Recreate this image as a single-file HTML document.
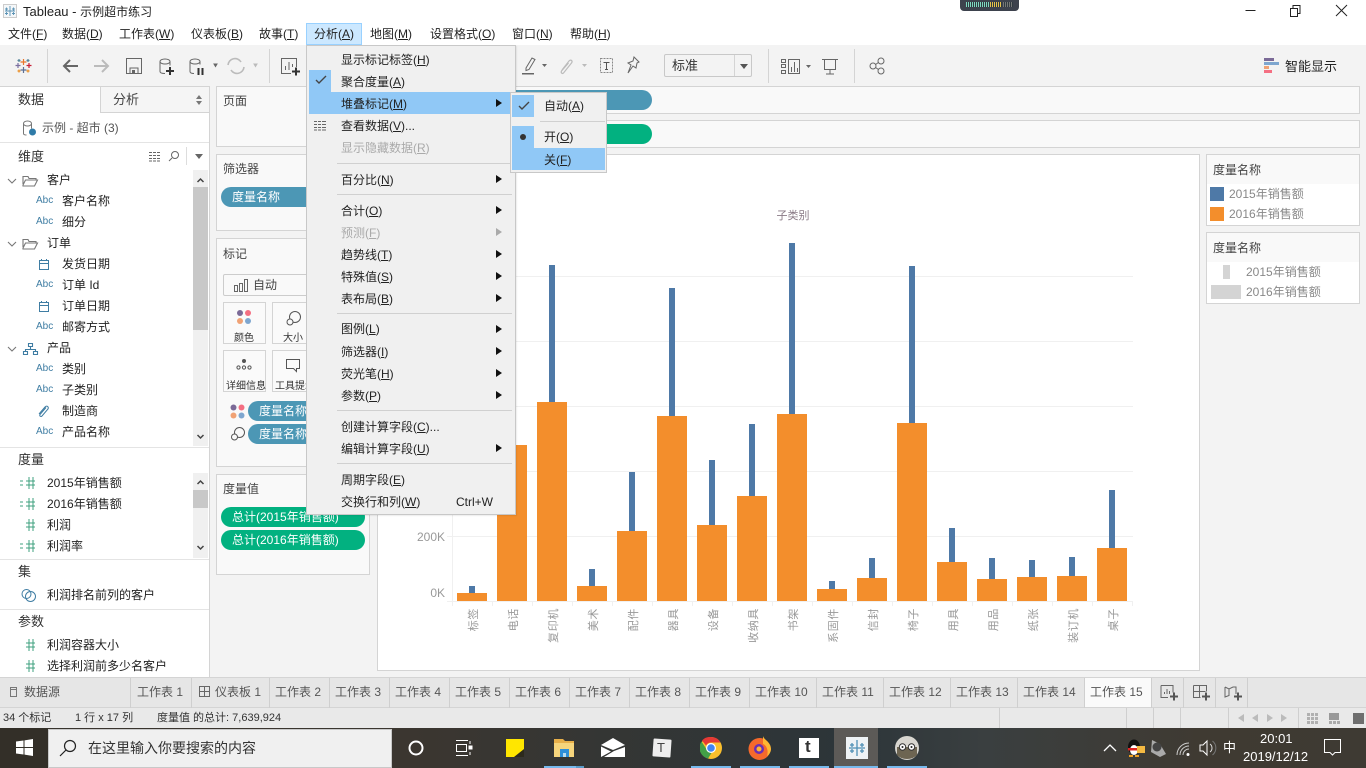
<!DOCTYPE html>
<html lang="zh"><head><meta charset="utf-8"><title>Tableau - 示例超市练习</title>
<style>
*{box-sizing:border-box}
html,body{margin:0;padding:0;width:1366px;height:768px;overflow:hidden;background:#f3f3f3;font-family:"Liberation Sans","Noto Sans CJK SC",sans-serif;font-size:12px;color:#222}
.a,.t,svg.i{position:absolute}
.t{white-space:nowrap;line-height:18px;height:18px}
u{text-decoration:underline;text-underline-offset:1px}
.b{position:absolute;background:#f9f9f9;border:1px solid #d4d4d4}
.p{position:absolute;height:20px;border-radius:10px;color:#fff;line-height:21px;white-space:nowrap;overflow:hidden;padding-left:11px}
.bl{background:#4c97b5}.gr{background:#02b180}
.abc{color:#3f7da3;font-size:10px;left:36px}
.f{left:62px}
.g{color:#aaa}
.m{left:341px}
.ar{position:absolute;left:496px;width:0;height:0;border-left:6px solid #111;border-top:4px solid transparent;border-bottom:4px solid transparent}
.sep{position:absolute;height:1px;background:#d0d0d0;left:337px;width:175px}
.hd{font-size:13px;left:18px;color:#333}
.n{left:47px}
.tab{color:#555;top:683px}
.st{font-size:11px;color:#333;top:709px}
.v{position:absolute;width:1px;background:#cfcfcf}
.tb{position:absolute;width:1px;background:#d4d4d4;top:49px;height:34px}
.hs{position:absolute;height:1px;background:#e4e4e4;left:0;width:209px}
</style></head><body>

<!-- title bar -->
<div class="a" style="left:0;top:0;width:1366px;height:45px;background:#fff"></div>
<svg class="i" style="left:3px;top:4px" width="14" height="14" viewBox="0 0 14 14"><rect x=".5" y=".5" width="13" height="13" fill="#f4f7f9" stroke="#ccc"/><path d="M7 2v10M2 7h10M3.500 3.500v3M2 5h3M10.500 3.500v3M9 5h3M3.500 8v3M2 9.500h3M10.500 8v3M9 9.500h3" stroke="#5b93b5" stroke-width=".9" fill="none"/></svg>
<div class="t" style="left:23px;top:3px;font-size:13px;color:#222">Tableau - <span style="font-size:12px">示例超市练习</span></div>
<div class="a" style="left:960px;top:0;width:59px;height:11px;background:#3d424d;border-radius:0 0 4px 4px"></div>
<div class="a" style="left:966px;top:2px;width:36px;height:5px;background:repeating-linear-gradient(90deg,#7fd7c0 0 1px,#2f3a40 1px 2px)"></div>
<div class="a" style="left:990px;top:2px;width:12px;height:5px;background:repeating-linear-gradient(90deg,#e8c24a 0 1px,#2f3a40 1px 2px)"></div>
<div class="a" style="left:1003px;top:2px;width:10px;height:5px;background:repeating-linear-gradient(90deg,#777 0 1px,#2f3a40 1px 2px)"></div>
<svg class="i" style="left:1240px;top:0" width="126" height="24" fill="none" stroke="#222"><path d="M5.500 10.500h10"/><path d="M50.500 8.500h7v8h-7zM53 8V5.500h7v8h-2"/><path d="M96 5l11 11M107 5L96 16"/></svg>

<!-- menu bar -->
<div class="t" style="left:8px;top:25px">文件(<u>F</u>)</div>
<div class="t" style="left:62px;top:25px">数据(<u>D</u>)</div>
<div class="t" style="left:119px;top:25px">工作表(<u>W</u>)</div>
<div class="t" style="left:191px;top:25px">仪表板(<u>B</u>)</div>
<div class="t" style="left:259px;top:25px">故事(<u>T</u>)</div>
<div class="a" style="left:306px;top:23px;width:56px;height:22px;background:#cce8ff;border:1px solid #99d1ff"></div>
<div class="t" style="left:314px;top:25px">分析(<u>A</u>)</div>
<div class="t" style="left:370px;top:25px">地图(<u>M</u>)</div>
<div class="t" style="left:430px;top:25px">设置格式(<u>O</u>)</div>
<div class="t" style="left:512px;top:25px">窗口(<u>N</u>)</div>
<div class="t" style="left:570px;top:25px">帮助(<u>H</u>)</div>

<!-- toolbar -->
<div class="a" style="left:0;top:45px;width:1366px;height:41px;background:#f3f3f3"></div>
<div class="tb" style="left:47px"></div><div class="tb" style="left:269px"></div><div class="tb" style="left:768px"></div><div class="tb" style="left:854px"></div>
<svg class="i" style="left:14px;top:56px" width="19" height="19" viewBox="0 0 19 19" fill="none" stroke-width="1.200"><path d="M9.500 3v6M6.500 6h6" stroke="#e8762b"/><path d="M9.500 11v6M6.500 14h6" stroke="#5b6f95"/><path d="M4 7v5M1.500 9.500h5" stroke="#7b6fa0"/><path d="M15 7v5M12.500 9.500h5" stroke="#c72037"/><path d="M5 3v3M3.500 4.500h3M14 3v3M12.500 4.500h3" stroke="#59879b"/><path d="M5 13.500v3M3.500 15h3M14 13.500v3M12.500 15h3" stroke="#eb912b"/></svg>
<svg class="i" style="left:60px;top:55px" width="244" height="24" viewBox="0 0 244 24" fill="none">
<path d="M18 11H4M10 5l-6 6 6 6" stroke="#666" stroke-width="2"/>
<path d="M34 11h14M42 5l6 6-6 6" stroke="#bbb" stroke-width="2"/>
<path d="M66.500 3.500h15v15h-15zM70 18.500V13h8v5.500" stroke="#666"/><rect x="72" y="15" width="3" height="3" fill="#666"/>
<path d="M100 6.500a5 2.500 0 0 1 10 0v4M100 6.500v10c0 1.500 2 2 5 2M100 6.500a5 2.500 0 0 0 10 0" stroke="#666"/><path d="M110 12v8M106 16h8" stroke="#333" stroke-width="2"/>
<path d="M130 6.500a5 2.500 0 0 1 10 0v3M130 6.500v10c0 1.500 2 2 4 2M130 6.500a5 2.500 0 0 0 10 0" stroke="#666"/><path d="M138.500 13v7M142.500 13v7" stroke="#333" stroke-width="2"/>
<path d="M154 9l3 0-1.500 2.500z" fill="#666" stroke="#666"/>
<path d="M168 10a7 7 0 0 1 13-3M184 12a7 7 0 0 1-13 3" stroke="#bbb" stroke-width="1.600"/>
<path d="M194 9l3 0-1.500 2.500z" fill="#bbb" stroke="#bbb"/>
<path d="M236.500 12V3.500h-15v15H231M225.500 15v-4M229 15V7M232.500 12V9" stroke="#666"/>
<path d="M232 16.500h8M236 12.500v8" stroke="#333" stroke-width="2"/>
</svg>
<svg class="i" style="left:521px;top:56px" width="130" height="22" viewBox="0 0 130 22" fill="none">
<path d="M5 12l6-10 3 1.500-6 10-3 1z" stroke="#666"/><rect x="1" y="17" width="12" height="1.500" fill="#666"/>
<path d="M21 8h5l-2.500 3z" fill="#666"/>
<path d="M41 14l7-9c2-2 4 0 2.500 2l-8 10c-1 1-3 0-2-2l7-8" stroke="#bbb" stroke-width="1.200"/>
<path d="M61 8h5l-2.500 3z" fill="#bbb"/>
<rect x="79.500" y="2.500" width="12" height="14" stroke="#888" stroke-dasharray="2 1"/>
<path d="M82.500 6.500h6M85.500 6.500v7M84 13.500h3" stroke="#555"/>
<path d="M113 1l5 5-2 1-1 5-3-2-5 7 3-8-3-2 5-2z" stroke="#666"/>
</svg>
<div class="a" style="left:664px;top:54px;width:88px;height:23px;background:#f3f3f3;border:1px solid #c8c8c8;border-radius:2px"></div>
<div class="a" style="left:734px;top:55px;width:1px;height:21px;background:#d4d4d4"></div>
<div class="a" style="left:740px;top:64px;width:0;height:0;border-left:4px solid transparent;border-right:4px solid transparent;border-top:5px solid #555"></div>
<div class="t" style="left:672px;top:57px;font-size:13px;color:#333">标准</div>
<svg class="i" style="left:780px;top:56px" width="110" height="22" viewBox="0 0 110 22" fill="none" stroke="#666">
<path d="M1.500 3.500h4v3h-4zM1.500 8.500h4v3h-4zM1.500 14.500h4v3h-4zM8.500 3.500h11v14h-11z"/><path d="M11.500 16v-5M14.500 16V6M17.500 16v-4" />
<path d="M26 9h5l-2.500 3z" fill="#666" stroke="none"/>
<path d="M42 3.500h16M44.500 3.500v10h11v-10M50 13.500v4M46 18h8"/>
<circle cx="93" cy="10" r="3"/><circle cx="101" cy="5" r="3"/><circle cx="101" cy="15" r="3"/><path d="M95.500 8.500l3-2M95.500 11.500l3 2"/>
</svg>
<div class="a" style="left:1264px;top:58px;width:10px;height:3px;background:#7b6a97"></div>
<div class="a" style="left:1264px;top:62px;width:15px;height:3px;background:#7ea6cf"></div>
<div class="a" style="left:1264px;top:66px;width:5px;height:3px;background:#f0a275"></div>
<div class="a" style="left:1264px;top:70px;width:8px;height:3px;background:#f46f82"></div>
<div class="t" style="left:1285px;top:58px;font-size:13px;color:#222">智能显示</div>

<!-- left panel -->
<div class="a" style="left:0;top:86px;width:210px;height:591px;background:#fff;border-right:1px solid #d4d4d4"></div>
<div class="a" style="left:100px;top:86px;width:110px;height:27px;background:#f5f5f5;border:1px solid #d4d4d4;border-right:1px solid #d4d4d4"></div>
<div class="a" style="left:0;top:86px;width:100px;height:1px;background:#d4d4d4"></div>
<div class="t hd" style="top:91px">数据</div>
<div class="t" style="left:113px;top:91px;font-size:13px;color:#444">分析</div>
<div class="a" style="left:196px;top:95px;width:0;height:0;border-left:3px solid transparent;border-right:3px solid transparent;border-bottom:4px solid #777"></div>
<div class="a" style="left:196px;top:101px;width:0;height:0;border-left:3px solid transparent;border-right:3px solid transparent;border-top:4px solid #777"></div>
<svg class="i" style="left:22px;top:120px" width="16" height="16" viewBox="0 0 16 16" fill="none" stroke="#777"><path d="M1.500 3.500a4 2.500 0 0 1 8 0v5M1.500 3.500v10c0 1 1 1.500 3 1.500M1.500 3.500a4 2.500 0 0 0 8 0"/><circle cx="10.500" cy="12" r="3.500" fill="#2f7ba8" stroke="none"/></svg>
<div class="t" style="left:42px;top:119px;color:#555">示例 - 超市 (3)</div>
<div class="hs" style="top:142px"></div>
<div class="t hd" style="top:148px">维度</div>
<svg class="i" style="left:148px;top:150px" width="48" height="14" viewBox="0 0 48 14" fill="none" stroke="#666"><path d="M1 2.500h3M5 2.500h3M9 2.500h3M1 5.500h3M5 5.500h3M9 5.500h3M1 8.500h3M5 8.500h3M9 8.500h3M1 11h3M5 11h3M9 11h3"/><circle cx="27" cy="5" r="3.500"/><path d="M24 8l-3 3"/></svg>
<div class="a" style="left:186px;top:147px;width:1px;height:18px;background:#ddd"></div>
<div class="a" style="left:195px;top:154px;width:0;height:0;border-left:4px solid transparent;border-right:4px solid transparent;border-top:5px solid #666"></div>
<div class="a" style="left:193px;top:170px;width:15px;height:276px;background:#f0f0f0"></div>
<div class="a" style="left:193px;top:187px;width:15px;height:143px;background:#c8c8c8"></div>
<svg class="i" style="left:193px;top:173px" width="15" height="270" viewBox="0 0 15 270" fill="none" stroke="#444" stroke-width="1.500"><path d="M4.500 9L7.500 6l3 3M4.500 262l3 3 3-3"/></svg>

<svg class="i" style="left:7px;top:173px" width="32" height="185" viewBox="0 0 32 185" fill="none" stroke="#777" stroke-width="1.100">
<path d="M1 6l4 4 4-4M1 69l4 4 4-4M1 174l4 4 4-4"/>
<path d="M16 11V3.500h5l1 2h7v2M16 12l2.500-5h12l-3 6H16z" fill="#fff"/>
<path d="M16 74v-7.500h5l1 2h7v2M16 75l2.500-5h12l-3 6H16z" fill="#fff"/>
<path d="M21.500 170.500h4v3h-4zM16.500 178.500h4v3h-4zM26.500 178.500h4v3h-4zM23.500 173.500v3M18.500 178.500v-2h10v2" stroke="#3f7da3"/>
</svg>
<div class="t n" style="top:171px">客户</div>
<div class="t abc" style="top:192px">Abc</div><div class="t f" style="top:192px">客户名称</div>
<div class="t abc" style="top:213px">Abc</div><div class="t f" style="top:213px">细分</div>
<div class="t n" style="top:234px">订单</div>
<svg class="i" style="left:38px;top:258px" width="12" height="54" viewBox="0 0 12 54" fill="none" stroke="#3f7da3"><path d="M1.500 2.500h9v9h-9zM1.500 5.500h9M3.500 1v2M8.500 1v2"/><path d="M1.500 44.500h9v9h-9zM1.500 47.500h9M3.500 43v2M8.500 43v2"/></svg>
<div class="t f" style="top:255px">发货日期</div>
<div class="t abc" style="top:276px">Abc</div><div class="t f" style="top:276px">订单 Id</div>
<div class="t f" style="top:297px">订单日期</div>
<div class="t abc" style="top:318px">Abc</div><div class="t f" style="top:318px">邮寄方式</div>
<div class="t n" style="top:339px">产品</div>
<div class="t abc" style="top:360px">Abc</div><div class="t f" style="top:360px">类别</div>
<div class="t abc" style="top:381px">Abc</div><div class="t f" style="top:381px">子类别</div>
<svg class="i" style="left:37px;top:404px" width="14" height="14" viewBox="0 0 14 14" fill="none" stroke="#3f7da3"><path d="M2 10l6-7c2-2 4 0 3 2l-6 7c-1 1-3 0-2-1.500l6-7"/></svg>
<div class="t f" style="top:402px">制造商</div>
<div class="t abc" style="top:423px">Abc</div><div class="t f" style="top:423px">产品名称</div>
<div class="hs" style="top:447px"></div>
<div class="t hd" style="top:451px">度量</div>
<div class="a" style="left:193px;top:473px;width:15px;height:85px;background:#f0f0f0"></div>
<div class="a" style="left:193px;top:490px;width:15px;height:18px;background:#c8c8c8"></div>
<svg class="i" style="left:193px;top:476px" width="15" height="80" viewBox="0 0 15 80" fill="none" stroke="#444" stroke-width="1.500"><path d="M4.500 8L7.500 5l3 3M4.500 70l3 3 3-3"/></svg>
<svg class="i" style="left:19px;top:476px" width="16" height="200" viewBox="0 0 16 200" fill="none" stroke="#3fa07f">
<path d="M10 1v12M14 1v12M7 5h9M7 9h9"/>
<path d="M1 5h3M1 9h3M1 26h3M1 30h3M1 68h3M1 72h3"/>
<path d="M10 22v12M14 22v12M7 26h9M7 30h9M10 43v12M14 43v12M7 47h9M7 51h9M10 64v12M14 64v12M7 68h9M7 72h9M10 163v12M14 163v12M7 167h9M7 171h9M10 184v12M14 184v12M7 188h9M7 192h9"/>
</svg>
<div class="t n" style="top:474px">2015年销售额</div>
<div class="t n" style="top:495px">2016年销售额</div>
<div class="t n" style="top:516px">利润</div>
<div class="t n" style="top:537px">利润率</div>
<div class="hs" style="top:559px"></div>
<div class="t hd" style="top:563px">集</div>
<svg class="i" style="left:21px;top:588px" width="16" height="15" viewBox="0 0 16 15" fill="none" stroke="#3f7da3"><circle cx="5.500" cy="6" r="4.500"/><circle cx="9.500" cy="8.500" r="5"/></svg>
<div class="t n" style="top:586px">利润排名前列的客户</div>
<div class="hs" style="top:609px"></div>
<div class="t hd" style="top:613px">参数</div>
<div class="t n" style="top:636px">利润容器大小</div>
<div class="t n" style="top:657px">选择利润前多少名客户</div>

<!-- shelves -->
<div class="b" style="left:216px;top:86px;width:154px;height:61px"></div>
<div class="t" style="left:223px;top:92px;color:#444">页面</div>
<div class="b" style="left:216px;top:154px;width:154px;height:77px"></div>
<div class="t" style="left:223px;top:160px;color:#444">筛选器</div>
<div class="p bl" style="left:221px;top:187px;width:100px">度量名称</div>
<div class="b" style="left:216px;top:238px;width:154px;height:229px"></div>
<div class="t" style="left:223px;top:245px;color:#444">标记</div>
<div class="a" style="left:223px;top:274px;width:140px;height:22px;background:#f9f9f9;border:1px solid #ccc;border-radius:2px"></div>
<svg class="i" style="left:233px;top:278px" width="15" height="15" fill="none" stroke="#666"><path d="M1.500 7.500h3v6h-3zM6.500 5.500h3v8h-3zM11.500 1.500h3v12h-3z"/></svg>
<div class="t" style="left:253px;top:276px;color:#444">自动</div>
<div class="a" style="left:223px;top:302px;width:43px;height:42px;border:1px solid #d4d4d4;background:#fafafa"></div>
<div class="a" style="left:272px;top:302px;width:43px;height:42px;border:1px solid #d4d4d4;background:#fafafa"></div>
<div class="a" style="left:223px;top:350px;width:43px;height:42px;border:1px solid #d4d4d4;background:#fafafa"></div>
<div class="a" style="left:272px;top:350px;width:43px;height:42px;border:1px solid #d4d4d4;background:#fafafa"></div>
<svg class="i" style="left:236px;top:309px" width="18" height="18"><circle cx="4" cy="4" r="3" fill="#7b6a97"/><circle cx="12" cy="4" r="3" fill="#f46f82"/><circle cx="4" cy="12" r="3" fill="#f0a275"/><circle cx="12" cy="12" r="3" fill="#7ea6cf"/></svg>
<div class="t" style="left:234px;top:330px;font-size:10px;color:#333">颜色</div>
<svg class="i" style="left:285px;top:310px" width="17" height="17" fill="none" stroke="#555"><circle cx="10" cy="7" r="5.500"/><circle cx="5" cy="12" r="3" fill="#fafafa"/></svg>
<div class="t" style="left:283px;top:330px;font-size:10px;color:#333">大小</div>
<svg class="i" style="left:236px;top:358px" width="16" height="14" fill="none" stroke="#555"><circle cx="8" cy="3" r="1.500" fill="#555"/><circle cx="2.500" cy="9.500" r="1.600"/><circle cx="8" cy="9.500" r="1.600"/><circle cx="13.500" cy="9.500" r="1.600"/></svg>
<div class="t" style="left:226px;top:378px;font-size:10px;color:#333">详细信息</div>
<svg class="i" style="left:285px;top:358px" width="16" height="16" fill="none" stroke="#555"><path d="M1.500 1.500h13v9h-3v3l-3-3h-7z"/></svg>
<div class="t" style="left:275px;top:378px;font-size:10px;color:#333;width:39px;overflow:hidden">工具提示</div>
<svg class="i" style="left:230px;top:404px" width="16" height="16"><circle cx="3.500" cy="3.500" r="3" fill="#7b6a97"/><circle cx="11.500" cy="3.500" r="3" fill="#f46f82"/><circle cx="3.500" cy="11.500" r="3" fill="#f0a275"/><circle cx="11.500" cy="11.500" r="3" fill="#7ea6cf"/></svg>
<svg class="i" style="left:230px;top:426px" width="16" height="16" fill="none" stroke="#555"><circle cx="9.500" cy="6.500" r="5"/><circle cx="4.500" cy="11" r="3" fill="#f9f9f9"/></svg>
<div class="p bl" style="left:248px;top:401px;width:100px">度量名称</div>
<div class="p bl" style="left:248px;top:424px;width:100px">度量名称</div>
<div class="b" style="left:216px;top:474px;width:154px;height:101px"></div>
<div class="t" style="left:223px;top:480px;color:#444">度量值</div>
<div class="p gr" style="left:221px;top:507px;width:144px">总计(2015年销售额)</div>
<div class="p gr" style="left:221px;top:530px;width:144px">总计(2016年销售额)</div>

<!-- columns / rows -->
<div class="b" style="left:377px;top:86px;width:983px;height:28px"></div>
<div class="b" style="left:377px;top:120px;width:983px;height:28px"></div>
<div class="p bl" style="left:440px;top:90px;width:212px"></div>
<div class="p gr" style="left:440px;top:124px;width:212px"></div>

<!-- chart -->
<div class="a" style="left:377px;top:154px;width:823px;height:517px;background:#fff;border:1px solid #d4d4d4"></div>
<svg class="i" style="left:377px;top:154px" width="823" height="517" viewBox="377 154 823 517" font-family="'Liberation Sans','Noto Sans CJK SC',sans-serif">
<g stroke="#f0f0f0"><path d="M452.500 276.500H1133M452.500 341.500H1133M452.500 406.500H1133M452.500 471.500H1133M447 536.500H1133M447 601.500H1133M452.500 250V601"/>
<path d="M452.500 602v4M492.500 602v4M532.500 602v4M572.500 602v4M612.500 602v4M652.500 602v4M692.500 602v4M732.500 602v4M772.500 602v4M812.500 602v4M852.500 602v4M892.500 602v4M932.500 602v4M972.500 602v4M1012.500 602v4M1052.500 602v4M1092.500 602v4M1132.500 602v4"/></g>
<text x="793" y="219" font-size="11" fill="#8a7a86" text-anchor="middle">子类别</text>
<g font-size="12" fill="#999" text-anchor="end"><text x="445" y="541">200K</text><text x="445" y="597">0K</text></g>
<g fill="#4e79a7"><rect x="469" y="586" width="6" height="15"/><rect x="549" y="265" width="6" height="336"/><rect x="589" y="569" width="6" height="32"/><rect x="629" y="472" width="6" height="129"/><rect x="669" y="288" width="6" height="313"/><rect x="709" y="460" width="6" height="141"/><rect x="749" y="424" width="6" height="177"/><rect x="789" y="243" width="6" height="358"/><rect x="829" y="581" width="6" height="20"/><rect x="869" y="558" width="6" height="43"/><rect x="909" y="266" width="6" height="335"/><rect x="949" y="528" width="6" height="73"/><rect x="989" y="558" width="6" height="43"/><rect x="1029" y="560" width="6" height="41"/><rect x="1069" y="557" width="6" height="44"/><rect x="1109" y="490" width="6" height="111"/></g>
<g fill="#f38e2c"><rect x="457" y="593" width="30" height="8"/><rect x="497" y="445" width="30" height="156"/><rect x="537" y="402" width="30" height="199"/><rect x="577" y="586" width="30" height="15"/><rect x="617" y="531" width="30" height="70"/><rect x="657" y="416" width="30" height="185"/><rect x="697" y="525" width="30" height="76"/><rect x="737" y="496" width="30" height="105"/><rect x="777" y="414" width="30" height="187"/><rect x="817" y="589" width="30" height="12"/><rect x="857" y="578" width="30" height="23"/><rect x="897" y="423" width="30" height="178"/><rect x="937" y="562" width="30" height="39"/><rect x="977" y="579" width="30" height="22"/><rect x="1017" y="577" width="30" height="24"/><rect x="1057" y="576" width="30" height="25"/><rect x="1097" y="548" width="30" height="53"/></g>
<g font-size="11" fill="#999" text-anchor="end" letter-spacing=".6">
<text transform="translate(477,608) rotate(-90)">标签</text><text transform="translate(517,608) rotate(-90)">电话</text><text transform="translate(557,608) rotate(-90)">复印机</text><text transform="translate(597,608) rotate(-90)">美术</text><text transform="translate(637,608) rotate(-90)">配件</text><text transform="translate(677,608) rotate(-90)">器具</text><text transform="translate(717,608) rotate(-90)">设备</text><text transform="translate(757,608) rotate(-90)">收纳具</text><text transform="translate(797,608) rotate(-90)">书架</text><text transform="translate(837,608) rotate(-90)">系固件</text><text transform="translate(877,608) rotate(-90)">信封</text><text transform="translate(917,608) rotate(-90)">椅子</text><text transform="translate(957,608) rotate(-90)">用具</text><text transform="translate(997,608) rotate(-90)">用品</text><text transform="translate(1037,608) rotate(-90)">纸张</text><text transform="translate(1077,608) rotate(-90)">装订机</text><text transform="translate(1117,608) rotate(-90)">桌子</text>
</g></svg>

<!-- legends -->
<div class="a" style="left:1206px;top:154px;width:154px;height:72px;background:#fff;border:1px solid #d4d4d4"></div>
<div class="a" style="left:1207px;top:155px;width:152px;height:29px;background:#f9f9f9"></div>
<div class="t" style="left:1213px;top:161px;color:#444">度量名称</div>
<div class="a" style="left:1210px;top:187px;width:14px;height:14px;background:#4e79a7"></div>
<div class="a" style="left:1210px;top:207px;width:14px;height:14px;background:#f38e2c"></div>
<div class="t" style="left:1229px;top:185px;color:#888">2015年销售额</div>
<div class="t" style="left:1229px;top:205px;color:#888">2016年销售额</div>
<div class="a" style="left:1206px;top:232px;width:154px;height:72px;background:#fff;border:1px solid #d4d4d4"></div>
<div class="a" style="left:1207px;top:233px;width:152px;height:29px;background:#f9f9f9"></div>
<div class="t" style="left:1213px;top:239px;color:#444">度量名称</div>
<div class="a" style="left:1223px;top:265px;width:7px;height:14px;background:#d4d4d4"></div>
<div class="a" style="left:1211px;top:285px;width:30px;height:14px;background:#d4d4d4"></div>
<div class="t" style="left:1246px;top:263px;color:#888">2015年销售额</div>
<div class="t" style="left:1246px;top:283px;color:#888">2016年销售额</div>

<!-- main menu -->
<div class="a" style="left:306px;top:45px;width:210px;height:470px;background:#f0f0f0;border:1px solid #c8c8c8;box-shadow:1px 1px 1px rgba(0,0,0,.08)"></div>
<div class="a" style="left:309px;top:70px;width:22px;height:22px;background:#90c8f6"></div>
<div class="a" style="left:309px;top:92px;width:201px;height:22px;background:#90c8f6"></div>
<svg class="i" style="left:315px;top:75px" width="12" height="10" fill="none" stroke="#444" stroke-width="1.400"><path d="M1 5l3 3 7-7"/></svg>
<svg class="i" style="left:314px;top:120px" width="13" height="11" fill="none" stroke="#666"><path d="M0 1.500h3M4 1.500h3M8 1.500h4M0 4.500h3M4 4.500h3M8 4.500h4M0 7.500h3M4 7.500h3M8 7.500h4M0 10h3M4 10h3M8 10h4"/></svg>
<div class="t m" style="top:51px">显示标记标签(<u>H</u>)</div>
<div class="t m" style="top:73px">聚合度量(<u>A</u>)</div>
<div class="t m" style="top:95px">堆叠标记(<u>M</u>)</div><div class="ar" style="top:99px"></div>
<div class="t m" style="top:117px">查看数据(<u>V</u>)...</div>
<div class="t m g" style="top:139px">显示隐藏数据(<u>R</u>)</div>
<div class="sep" style="top:163px"></div>
<div class="t m" style="top:171px">百分比(<u>N</u>)</div><div class="ar" style="top:175px"></div>
<div class="sep" style="top:194px"></div>
<div class="t m" style="top:202px">合计(<u>O</u>)</div><div class="ar" style="top:206px"></div>
<div class="t m g" style="top:224px">预测(<u>F</u>)</div><div class="ar" style="top:228px;border-left-color:#aaa"></div>
<div class="t m" style="top:246px">趋势线(<u>T</u>)</div><div class="ar" style="top:250px"></div>
<div class="t m" style="top:268px">特殊值(<u>S</u>)</div><div class="ar" style="top:272px"></div>
<div class="t m" style="top:290px">表布局(<u>B</u>)</div><div class="ar" style="top:294px"></div>
<div class="sep" style="top:313px"></div>
<div class="t m" style="top:320px">图例(<u>L</u>)</div><div class="ar" style="top:325px"></div>
<div class="t m" style="top:343px">筛选器(<u>I</u>)</div><div class="ar" style="top:347px"></div>
<div class="t m" style="top:365px">荧光笔(<u>H</u>)</div><div class="ar" style="top:369px"></div>
<div class="t m" style="top:387px">参数(<u>P</u>)</div><div class="ar" style="top:391px"></div>
<div class="sep" style="top:410px"></div>
<div class="t m" style="top:418px">创建计算字段(<u>C</u>)...</div>
<div class="t m" style="top:440px">编辑计算字段(<u>U</u>)</div><div class="ar" style="top:444px"></div>
<div class="sep" style="top:463px"></div>
<div class="t m" style="top:471px">周期字段(<u>E</u>)</div>
<div class="t m" style="top:493px">交换行和列(<u>W</u>)</div>
<div class="t" style="left:456px;top:493px">Ctrl+W</div>

<!-- sub menu -->
<div class="a" style="left:510px;top:92px;width:97px;height:81px;background:#f0f0f0;border:1px solid #c8c8c8"></div>
<div class="a" style="left:512px;top:95px;width:22px;height:22px;background:#90c8f6"></div>
<svg class="i" style="left:518px;top:101px" width="12" height="10" fill="none" stroke="#444" stroke-width="1.400"><path d="M1 5l3 3 7-7"/></svg>
<div class="a" style="left:540px;top:121px;width:65px;height:1px;background:#d0d0d0"></div>
<div class="a" style="left:512px;top:126px;width:22px;height:22px;background:#90c8f6"></div>
<div class="a" style="left:520px;top:134px;width:6px;height:6px;border-radius:50%;background:#333"></div>
<div class="a" style="left:512px;top:148px;width:93px;height:22px;background:#90c8f6"></div>
<div class="t" style="left:544px;top:97px">自动(<u>A</u>)</div>
<div class="t" style="left:544px;top:128px">开(<u>O</u>)</div>
<div class="t" style="left:544px;top:151px">关(<u>F</u>)</div>

<!-- sheet tabs -->
<div class="a" style="left:0;top:677px;width:1366px;height:31px;background:#e6e6e6;border-top:1px solid #d4d4d4"></div>
<div class="a" style="left:1085px;top:678px;width:66px;height:30px;background:#fafafa"></div>
<div class="a" style="left:0;top:707px;width:1366px;height:1px;background:#d4d4d4"></div>
<div class="v" style="left:130px;top:678px;height:30px"></div><div class="v" style="left:191px;top:678px;height:30px"></div><div class="v" style="left:269px;top:678px;height:30px"></div><div class="v" style="left:329px;top:678px;height:30px"></div><div class="v" style="left:389px;top:678px;height:30px"></div><div class="v" style="left:449px;top:678px;height:30px"></div><div class="v" style="left:509px;top:678px;height:30px"></div><div class="v" style="left:569px;top:678px;height:30px"></div><div class="v" style="left:629px;top:678px;height:30px"></div><div class="v" style="left:689px;top:678px;height:30px"></div><div class="v" style="left:749px;top:678px;height:30px"></div><div class="v" style="left:816px;top:678px;height:30px"></div><div class="v" style="left:883px;top:678px;height:30px"></div><div class="v" style="left:950px;top:678px;height:30px"></div><div class="v" style="left:1017px;top:678px;height:30px"></div><div class="v" style="left:1084px;top:678px;height:30px"></div><div class="v" style="left:1151px;top:678px;height:30px"></div><div class="v" style="left:1183px;top:678px;height:30px"></div><div class="v" style="left:1215px;top:678px;height:30px"></div><div class="v" style="left:1247px;top:678px;height:30px"></div>
<svg class="i" style="left:9px;top:685px" width="10" height="14" fill="none" stroke="#777"><path d="M1.500 2.500h6v9h-6zM1.500 4.500h6"/></svg>
<div class="t tab" style="left:24px">数据源</div>
<div class="t tab" style="left:137px">工作表 1</div>
<svg class="i" style="left:199px;top:686px" width="12" height="12" fill="none" stroke="#666"><path d="M.5 .5h10v10H.5zM5.500 .5v10M.5 5.500h10"/></svg>
<div class="t tab" style="left:215px">仪表板 1</div>
<div class="t tab" style="left:275px">工作表 2</div>
<div class="t tab" style="left:335px">工作表 3</div>
<div class="t tab" style="left:395px">工作表 4</div>
<div class="t tab" style="left:455px">工作表 5</div>
<div class="t tab" style="left:515px">工作表 6</div>
<div class="t tab" style="left:575px">工作表 7</div>
<div class="t tab" style="left:635px">工作表 8</div>
<div class="t tab" style="left:695px">工作表 9</div>
<div class="t tab" style="left:755px">工作表 10</div>
<div class="t tab" style="left:822px">工作表 11</div>
<div class="t tab" style="left:889px">工作表 12</div>
<div class="t tab" style="left:956px">工作表 13</div>
<div class="t tab" style="left:1023px">工作表 14</div>
<div class="t tab" style="left:1090px">工作表 15</div>
<svg class="i" style="left:1160px;top:684px" width="84" height="18" viewBox="0 0 84 18" fill="none" stroke="#666"><path d="M1 1.500h12v7M1 1.500v12h7M4.500 10V8M7 10V5M9.500 10V7"/><path d="M10 12.500h8M14 8.500v8" stroke-width="2" stroke="#555"/><path d="M33.500 1.500h13v6M33.500 1.500v12h7M39.500 1.500v12M33.500 7.500h12"/><path d="M42 12.500h8M46 8.500v8" stroke-width="2" stroke="#555"/><path d="M65 3l4 2 4-2 3 0v7M65 3v10l4-1.500M69 5v7"/><path d="M74 12.500h8M78 8.500v8" stroke-width="2" stroke="#555"/></svg>

<!-- status bar -->
<div class="a" style="left:0;top:708px;width:1366px;height:20px;background:#e9e9e9"></div>
<div class="t st" style="left:3px">34 个标记</div>
<div class="t st" style="left:75px">1 行 x 17 列</div>
<div class="t st" style="left:157px">度量值 的总计: 7,639,924</div>
<div class="v" style="left:999px;top:708px;height:20px"></div><div class="v" style="left:1126px;top:708px;height:20px"></div><div class="v" style="left:1153px;top:708px;height:20px"></div><div class="v" style="left:1180px;top:708px;height:20px"></div><div class="v" style="left:1228px;top:708px;height:20px"></div><div class="v" style="left:1298px;top:708px;height:20px"></div>
<svg class="i" style="left:1234px;top:711px" width="130" height="14" viewBox="0 0 130 14" fill="#bbb"><path d="M3 3v8M10 3v8L4 7zM18 7l6-4v8zM33 3l6 4-6 4zM47 3l6 4-6 4zM54 3v8"/><g fill="#b0b0b0"><rect x="73" y="2" width="3" height="3"/><rect x="77" y="2" width="3" height="3"/><rect x="81" y="2" width="3" height="3"/><rect x="73" y="6" width="3" height="3"/><rect x="77" y="6" width="3" height="3"/><rect x="81" y="6" width="3" height="3"/><rect x="73" y="10" width="3" height="3"/><rect x="77" y="10" width="3" height="3"/><rect x="81" y="10" width="3" height="3"/></g><rect x="95" y="2" width="10" height="7" fill="#999"/><rect x="95" y="10" width="3" height="3" fill="#aaa"/><rect x="99" y="10" width="3" height="3" fill="#aaa"/><rect x="103" y="10" width="3" height="3" fill="#aaa"/><rect x="119" y="2" width="11" height="11" fill="#6e6e6e"/></svg>

<!-- taskbar -->
<div class="a" style="left:0;top:728px;width:1366px;height:40px;background:linear-gradient(90deg,#38332d 0,#3b3630 30%,#2c3539 62%,#3a3f40 72%,#3f3a32 88%,#3e3a33 100%)"></div>
<div class="a" style="left:0;top:728px;width:48px;height:40px;background:#332f28"></div>
<svg class="i" style="left:16px;top:739px" width="17" height="17" fill="#fff"><path d="M0 2.500L7.500 1.500V8H0zM8.500 1.400L17 0v8H8.500zM0 9h7.500v6.500L0 14.500zM8.500 9H17v8l-8.500-1.400z"/></svg>
<div class="a" style="left:48px;top:729px;width:344px;height:39px;background:#f0f0f0;border:1px solid #c8c8c8"></div>
<svg class="i" style="left:59px;top:739px" width="18" height="18" fill="none" stroke="#222" stroke-width="1.200"><circle cx="11" cy="7" r="5.500"/><path d="M7 11l-6 6"/></svg>
<div class="t" style="left:88px;top:739px;font-size:14px;color:#333">在这里输入你要搜索的内容</div>
<svg class="i" style="left:405px;top:737px" width="24" height="24" fill="none" stroke="#fff" stroke-width="2"><circle cx="11" cy="11" r="6.500"/></svg>
<svg class="i" style="left:455px;top:739px" width="20" height="18" fill="none" stroke="#fff"><path d="M1 1.500h12M1 16.500h12M1.500 5.500h10v7h-10zM15 2v3M15 13v3"/><rect x="14" y="7" width="3" height="3" fill="#fff"/></svg>
<svg class="i" style="left:506px;top:739px" width="18" height="18"><rect width="18" height="18" fill="#ffe600"/><path d="M18 10v8H8z" fill="#2c2a1c"/></svg>
<svg class="i" style="left:553px;top:738px" width="22" height="20"><path d="M1 1h9l2 2h9v16H1z" fill="#e8b04a"/><rect x="1" y="5" width="20" height="14" fill="#f6d57c"/><rect x="7" y="11" width="9" height="8" fill="#2f8fd8"/><rect x="10" y="15" width="3" height="4" fill="#bde"/></svg>
<svg class="i" style="left:601px;top:738px" width="24" height="20"><path d="M0 7l12-7 12 7-12 5z" fill="#fff"/><path d="M0 8.500l10 5L0 19zM24 9v10H3l10-6z" fill="#fff"/></svg>
<svg class="i" style="left:651px;top:737px" width="22" height="22"><rect x="2" y="2" width="18" height="18" rx="1" fill="#eee" transform="rotate(4 11 11)"/></svg>
<div class="t" style="left:657px;top:739px;color:#444;font-size:13px">T</div>
<svg class="i" style="left:700px;top:737px" width="22" height="22" viewBox="0 0 22 22"><circle cx="11" cy="11" r="11" fill="#fbc02d"/><path d="M11 0a11 11 0 0 1 9.500 5.500H11a5.500 5.500 0 0 0-5 3L2 3.500A11 11 0 0 1 11 0z" fill="#e53935"/><path d="M1.500 4.500A11 11 0 0 0 8 21.600l4-6.600a5 5 0 0 1-6-3.500z" fill="#43a047"/><circle cx="11" cy="11" r="5" fill="#fff"/><circle cx="11" cy="11" r="3.800" fill="#4285f4"/></svg>
<svg class="i" style="left:748px;top:736px" width="23" height="24" viewBox="0 0 23 24"><circle cx="11.500" cy="13" r="11" fill="#f5692c"/><path d="M15 0c1 4 8 6 8 13 0 3-2 6-4 7 2-6-1-11-4-12z" fill="#ffb733"/><circle cx="11" cy="13" r="5" fill="#6a2fb5"/><circle cx="11" cy="13" r="2.500" fill="#ffb733"/></svg>
<div class="a" style="left:799px;top:738px;width:20px;height:20px;background:#fff"></div>
<div class="t" style="left:805px;top:738px;font-size:17px;font-weight:bold;color:#333">t</div>
<div class="a" style="left:834px;top:728px;width:44px;height:40px;background:#5c5a57"></div>
<svg class="i" style="left:846px;top:737px" width="22" height="22" viewBox="0 0 22 22"><rect width="22" height="22" fill="#eef2f5"/><path d="M11 3v16M3 11h16M6 6v4M4 8h4M16 6v4M14 8h4M6 12v4M4 14h4M16 12v4M14 14h4" stroke="#4f8fb5" stroke-width="1.300" fill="none"/></svg>
<svg class="i" style="left:895px;top:736px" width="24" height="24" viewBox="0 0 24 24"><circle cx="12" cy="12" r="12" fill="#d8d6d0"/><path d="M2 11h20v8a12 9 0 0 1-20 0z" fill="#6d6552"/><circle cx="7.500" cy="11" r="3.200" fill="#fff" stroke="#333"/><circle cx="16.500" cy="11" r="3.200" fill="#fff" stroke="#333"/><circle cx="7.500" cy="11" r="1" fill="#222"/><circle cx="16.500" cy="11" r="1" fill="#222"/></svg>
<div class="a" style="left:544px;top:766px;width:32px;height:2px;background:#76b9ed"></div><div class="a" style="left:576px;top:766px;width:8px;height:2px;background:#5a9bc8"></div><div class="a" style="left:691px;top:766px;width:40px;height:2px;background:#76b9ed"></div><div class="a" style="left:740px;top:766px;width:40px;height:2px;background:#76b9ed"></div><div class="a" style="left:789px;top:766px;width:40px;height:2px;background:#76b9ed"></div><div class="a" style="left:834px;top:766px;width:44px;height:2px;background:#76b9ed"></div><div class="a" style="left:887px;top:766px;width:40px;height:2px;background:#76b9ed"></div>
<svg class="i" style="left:1100px;top:736px" width="130" height="24" viewBox="0 0 130 24" fill="none">
<path d="M4 15l6-6 6 6" stroke="#fff" stroke-width="1.300"/>
<ellipse cx="34" cy="11" rx="6" ry="7.500" fill="#111"/><ellipse cx="34" cy="14" rx="4" ry="5" fill="#fff"/><rect x="28" y="12" width="11" height="2.500" fill="#d22"/><path d="M29 20h4M35 20h4" stroke="#f0a020" stroke-width="2"/><rect x="37" y="10" width="8" height="7" fill="#f4b942"/>
<path d="M52 4l8 4 6 10-6 3-9-5z" fill="#aaa"/><circle cx="57" cy="11" r="4.500" fill="#444"/>
<path d="M77 19a12 12 0 0 1 12-12M80 19a9 9 0 0 1 9-9M83 19a6 6 0 0 1 6-6" stroke="#ccc"/><circle cx="88" cy="18.500" r="1.500" fill="#fff"/>
<path d="M100 9h3l4-4v14l-4-4h-3z" stroke="#fff"/><path d="M110 8a5 5 0 0 1 0 8" stroke="#ddd"/><path d="M112.500 5a9 9 0 0 1 0 14" stroke="#777"/>
</svg>
<div class="t" style="left:1223px;top:739px;font-size:13px;color:#fff">中</div>
<div class="t" style="left:1260px;top:730px;font-size:13px;color:#fff">20:01</div>
<div class="t" style="left:1243px;top:748px;font-size:13px;color:#fff">2019/12/12</div>
<svg class="i" style="left:1324px;top:739px" width="19" height="18" fill="none" stroke="#fff"><path d="M.5 .5h16v13H11L8.500 16 6 13.500H.500z"/></svg>

</body></html>
